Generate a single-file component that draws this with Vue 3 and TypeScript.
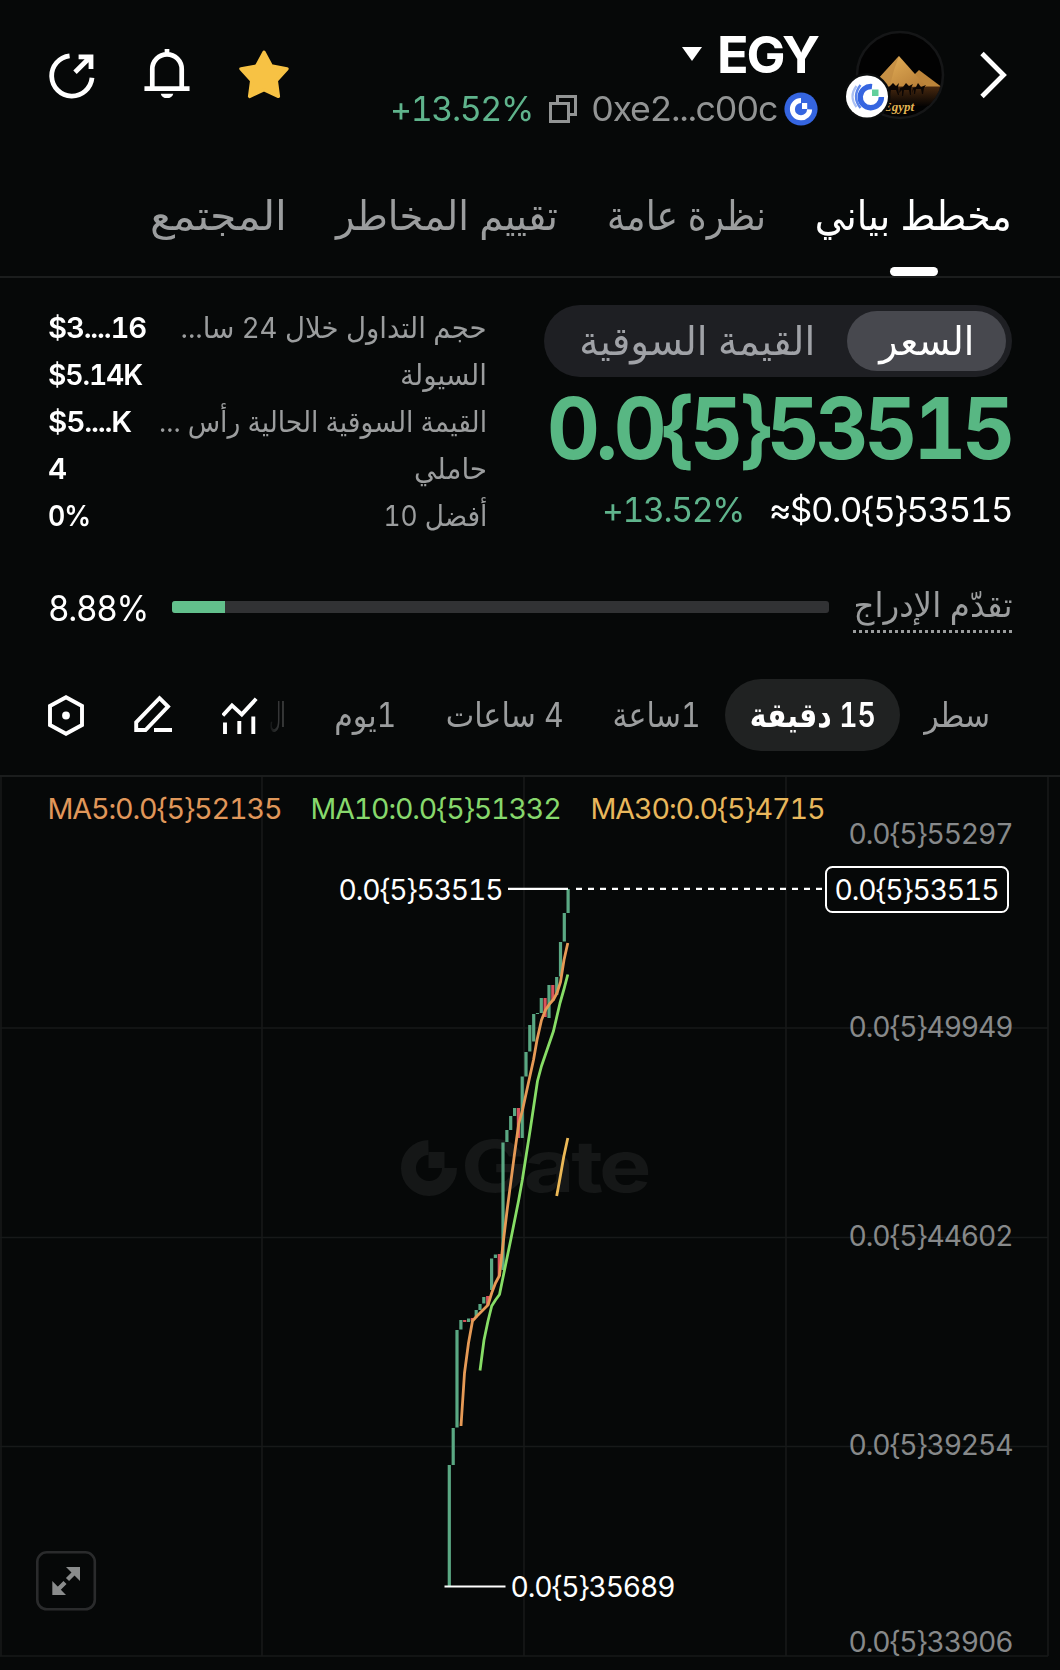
<template>
  <div class="page" dir="rtl">
    <header class="header">
      <div class="actions">
        <svg class="icon-share" width="46" height="48" viewBox="0 0 46 48">
          <path d="M20.6 4.8A20.2 20.2 0 1 0 43 26.8" />
          <path d="M26 21.3L40.6 6.7M29.6 5.9H42V18" />
        </svg>
        <svg class="icon-bell" width="46" height="51" viewBox="0 0 46 52">
          <path d="M8 39V20.5a15 15 0 0 1 30 0V39M0 40.3h46M23 0v5" />
          <path class="solid" d="M16.6 45.5h12.8a6.6 6 0 0 1-12.8 0z" />
        </svg>
        <svg class="icon-star" width="50" height="49" viewBox="0 0 50 49">
          <path
            d="M25 2.2L32.4 16L48 18.8L37.3 30.6L39.4 46.4L25 39.7L10.6 46.4L12.7 30.6L2 18.8L17.6 16Z"
          />
        </svg>
      </div>
      <div class="token">
        <div class="token-name">
          <svg width="22" height="16" viewBox="0 0 22 16"><path d="M1 1h20L11 15z" fill="#fff" /></svg>
          <b v-fit="101" class="num">EGY</b>
        </div>
        <div class="token-info">
          <span v-fit="143" class="num up">+13.52%</span>
          <svg class="icon-copy" width="28" height="28" viewBox="0 0 28 28">
            <path d="M1.5 8.5h18v18h-18zM8.5 8V1.5H26.5V19.5H20" />
          </svg>
          <span v-fit="186" class="num address">0xe2...c00c</span>
          <svg class="gate-badge" width="34" height="34" viewBox="0 0 34 34">
            <circle cx="17" cy="17" r="16.6" fill="#3565e0" />
            <path d="M17 8.6A8.6 8.6 0 1 0 25.6 17.4" fill="none" stroke="#fff" stroke-width="5" />
            <path d="M18 11h5.2v6H18z" fill="#fff" />
          </svg>
        </div>
      </div>
      <svg class="avatar" width="100" height="94" viewBox="0 0 100 94">
        <defs>
          <linearGradient id="sand" x1="0" y1="0" x2="1" y2="1">
            <stop offset="0" stop-color="#e9b65c" />
            <stop offset="1" stop-color="#b57b35" />
          </linearGradient>
          <linearGradient id="ground" x1="0" y1="0" x2="0" y2="1">
            <stop offset="0" stop-color="#4a2a10" />
            <stop offset="1" stop-color="#050302" />
          </linearGradient>
          <clipPath id="face"><circle cx="54" cy="47" r="42" /></clipPath>
        </defs>
        <circle cx="54" cy="47" r="43" fill="#020202" stroke="#151617" stroke-width="2.6" />
        <g clip-path="url(#face)">
          <path d="M10 58h90v20H10z" fill="url(#ground)" />
          <path d="M66 49L73 42L95 58.5H66z" fill="#bd853a" />
          <path d="M33 50L53 28L80 58.5H30z" fill="url(#sand)" />
          <path d="M53 28L48 42L44 57H30V53z" fill="#c08a42" opacity=".7" />
          <g fill="#0b0604">
            <path d="M40 65l2-5 2-2 3-3 3 3 3-3-1 4 1 8h-1l-2-5h-5l-1 5h-1l-1-5z" />
            <path d="M53 65l1-5 3-1 3-4 3 3 4-2-2 4v7h-1l-1-5h-5l-1 6h-1v-6z" />
            <path d="M66 65l1-5 3-1 2-4 3 4 5-2-2 3-1 6h-1l-1-5h-5l-1 5h-1v-5z" />
          </g>
          <text x="37" y="83" class="avatar-caption">Egypt</text>
        </g>
        <circle cx="21" cy="68.5" r="23.5" fill="#0a0c0c" />
        <circle cx="21" cy="68.5" r="21" fill="#fff" />
        <g fill="none">
          <path d="M26 58.6A10.6 10.6 0 1 0 35.4 69" stroke="#3565e0" stroke-width="5.4" />
          <path d="M14.5 57Q5.5 68.500 14.5 80" stroke="#5d86ea" stroke-width="2.4" />
          <path d="M10.5 58Q2.500 68.500 10.5 79" stroke="#a9bff3" stroke-width="2.2" />
        </g>
        <path d="M26 61.500h6.500v6.500H26z" fill="#62cf9c" />
      </svg>
      <svg class="icon-next" width="27" height="48" viewBox="0 0 27 48">
        <path d="M2 2.5L23.500 24L2 45.5" />
      </svg>
    </header>

    <nav class="tabs">
      <a v-for="tab in tabs" :key="tab.text" class="tab" :class="{ active: tab.active }">
        <span v-fit="tab.width">{{ tab.text }}</span>
      </a>
    </nav>

    <section class="summary">
      <div class="price">
        <div class="switch">
          <span class="switch-item on"><span v-fit="95">السعر</span></span>
          <span class="switch-item"><span v-fit="236">القيمة السوقية</span></span>
        </div>
        <div class="price-main"><span v-fit="464">0.0{5}53515</span></div>
        <div class="price-sub">
          <span v-fit="142" class="num up">+13.52%</span>
          <span v-fit="243" class="num">≈$0.0{5}53515</span>
        </div>
      </div>
      <ul class="stats">
        <li v-for="row in stats" :key="row.label">
          <span v-fit="row.labelWidth" class="stat-label">{{ row.label }}</span>
          <span v-fit="row.valueWidth" class="num stat-value">{{ row.value }}</span>
        </li>
      </ul>
    </section>

    <section class="progress">
      <span class="progress-label"><span v-fit="159">تقدّم الإدراج</span></span>
      <div class="bar"><div class="bar-fill" :style="{ width: progressFill + '%' }"></div></div>
      <span v-fit="100" class="num progress-value">8.88%</span>
    </section>

    <section class="toolbar">
      <div class="intervals">
        <span v-for="item in intervals" :key="item.text" class="interval" :class="{ on: item.active }">
          <span v-fit="item.width">{{ item.text }}</span>
        </span>
      </div>
      <div class="tools">
        <svg width="36" height="42" viewBox="0 0 36 42">
          <path d="M18 3.200L34 12V31L18 39.800L2 31V12Z" />
          <circle cx="18" cy="21.5" r="2.4" class="dot" />
        </svg>
        <svg width="38" height="42" viewBox="0 0 38 42">
          <path d="M25.500 4.200L34 12.500L11.500 36H2.200V28.300ZM20 36H38" />
        </svg>
        <svg width="36" height="42" viewBox="0 0 36 42">
          <path d="M.8 21.500L10 11.400L19.800 20.400L34.200 4.800" />
          <path d="M3 28.500V40M17.300 27V40M31.300 22.500V40" />
        </svg>
      </div>
    </section>

    <svg class="chart" width="1060" height="893" viewBox="0 777 1060 893">
      <g class="grid">
        <path v-for="x in gridX" :key="'x' + x" :d="`M${x} 777V1656`" />
        <path v-for="y in gridY" :key="'y' + y" :d="`M0 ${y}H1048`" />
      </g>

      <g class="watermark">
        <path d="M428.500 1147.500A20.500 20.500 0 1 0 449.500 1168" />
        <rect x="428.500" y="1152" width="16" height="16" />
        <text x="461" y="1192" textLength="187" lengthAdjust="spacingAndGlyphs">Gate</text>
      </g>

      <rect
        v-for="c in candles"
        :key="c[0]"
        :x="c[0] - 1.6"
        :y="c[1]"
        width="3.2"
        :height="c[2] - c[1]"
        :fill="c[3] ? '#d9535b' : '#5aa883'"
      />
      <polyline class="ma" :points="ma5" stroke="#e69a56" />
      <polyline class="ma" :points="ma10" stroke="#87dd66" />
      <polyline class="ma" :points="ma30" stroke="#ecb957" />

      <path class="mark" d="M508 888.8H568M444.5 1586.5H505.5" />
      <path class="mark dashed" d="M576 888.8H823" />
      <rect class="price-tag" x="826" y="867" width="182" height="45" rx="6.5" />

      <text
        v-for="t in chartTexts"
        :key="t.x + '-' + t.y"
        :x="t.x"
        :y="t.y"
        :fill="t.color"
        :textLength="t.width"
        lengthAdjust="spacingAndGlyphs"
      >{{ t.text }}</text>

      <g class="fullscreen">
        <rect x="37.3" y="1552.3" width="57.500" height="57" rx="9.500" />
        <path d="M66 1567H80V1581Z" />
        <path d="M52.300 1581V1595H66Z" />
        <path class="shaft" d="M76 1571L67.500 1579.500M56.500 1591L65 1582.500" />
      </g>
    </svg>
  </div>
</template>

<script setup lang="ts">
import type { Directive } from 'vue';

// Squeezes or stretches a label horizontally to the given width
const vFit: Directive<HTMLElement, number> = {
  mounted(el, { value }) {
    el.style.display = 'inline-block';
    el.style.whiteSpace = 'nowrap';
    el.style.flex = 'none';
    const natural = el.getBoundingClientRect().width;
    const rtl = getComputedStyle(el).direction === 'rtl';
    el.style.transformOrigin = rtl ? 'right center' : 'left center';
    el.style.transform = `scaleX(${value / natural})`;
    el.style.marginInlineEnd = `${value - natural}px`;
  },
};

const tabs = [
  { text: 'مخطط بياني', width: 197, active: true },
  { text: 'نظرة عامة', width: 159, active: false },
  { text: 'تقييم المخاطر', width: 222, active: false },
  { text: 'المجتمع', width: 137, active: false },
];

const stats = [
  { label: 'حجم التداول خلال 24 سا...', labelWidth: 306, value: '$3....16', valueWidth: 98 },
  { label: 'السيولة', labelWidth: 87, value: '$5.14K', valueWidth: 94 },
  { label: 'القيمة السوقية الحالية رأس ...', labelWidth: 328, value: '$5....K', valueWidth: 83 },
  { label: 'حاملي', labelWidth: 73, value: '4', valueWidth: 18 },
  { label: 'أفضل 10', labelWidth: 104, value: '0%', valueWidth: 42 },
];

const progressFill = 8.06;

const intervals = [
  { text: 'سطر', width: 66, active: false },
  { text: '15 دقيقة', width: 126, active: true },
  { text: '1ساعة', width: 88, active: false },
  { text: '4 ساعات', width: 118, active: false },
  { text: '1يوم', width: 62, active: false },
  { text: 'ال', width: 16, active: false },
];

const gridX = [1, 262, 524, 786, 1048];
const gridY = [1028, 1237.5, 1446.5, 1656];

// x, top, bottom, 1 = falling
const candles = [
  [449.3, 1465, 1586, 0],
  [453.2, 1428, 1465, 0],
  [457, 1330, 1427.5, 0],
  [460.9, 1320, 1329.5, 0],
  [464.7, 1320, 1322, 1],
  [468.6, 1318.5, 1322, 0],
  [472.4, 1318, 1321, 1],
  [476.2, 1310, 1317.5, 0],
  [480, 1304, 1310, 0],
  [483.8, 1297, 1303.5, 0],
  [487.7, 1296, 1305, 1],
  [491.6, 1258.5, 1290, 0],
  [495.4, 1254.5, 1258, 0],
  [499.3, 1254, 1276, 1],
  [503, 1142.5, 1270, 0],
  [506.9, 1130, 1142, 0],
  [510.7, 1116, 1130, 0],
  [514.6, 1108, 1116, 0],
  [518.4, 1108, 1138, 1],
  [522.2, 1076.5, 1138, 0],
  [526, 1052, 1076.5, 0],
  [529.8, 1025, 1051.5, 0],
  [533.7, 1014, 1041.5, 0],
  [537.5, 1013, 1014, 0],
  [541.3, 998, 1013, 0],
  [545.1, 998, 1017, 1],
  [549, 985, 1018, 0],
  [552.8, 985, 1001, 1],
  [556.7, 977, 995, 0],
  [560.5, 942, 976.5, 0],
  [564.3, 913, 941.5, 0],
  [568.1, 889, 913, 0],
];

const ma5 =
  '461,1426 464.5,1373 468.5,1343 472.5,1321 476.5,1316.5 480,1313 488,1305 491.7,1293 495.5,1283 ' +
  '499.5,1275.5 503.5,1240 507,1211 514.5,1154 518.7,1124 522.5,1110 529.5,1078 533.5,1060 ' +
  '537,1040 541.5,1020 545.5,1010 549.5,1004 553.5,999.5 557,993 560.5,982 564,960 567.8,943';
const ma10 =
  '480,1370.5 484,1340 488,1321 491.7,1306 495.5,1300 499.5,1294.5 503.5,1275 510.7,1240 518.7,1200 ' +
  '522.3,1180 530,1131 537.5,1081 541.5,1066 553.5,1031 560,1003 564,989 567.8,974.5';
const ma30 = '556.7,1196 560,1178 563.7,1157 567.8,1138';

const chartTexts = [
  { text: 'MA5:0.0{5}52135', x: 47.5, y: 819.3, width: 234, color: '#e0975a' },
  { text: 'MA10:0.0{5}51332', x: 310.5, y: 819.3, width: 250, color: '#87d86c' },
  { text: 'MA30:0.0{5}4715', x: 590.5, y: 819.3, width: 234, color: '#e8b75c' },
  { text: '0.0{5}55297', x: 848.5, y: 844, width: 164, color: '#87898a' },
  { text: '0.0{5}49949', x: 848.5, y: 1037, width: 164, color: '#87898a' },
  { text: '0.0{5}44602', x: 848.5, y: 1246, width: 164, color: '#87898a' },
  { text: '0.0{5}39254', x: 848.5, y: 1455, width: 164, color: '#87898a' },
  { text: '0.0{5}33906', x: 848.5, y: 1652, width: 164, color: '#87898a' },
  { text: '0.0{5}53515', x: 834.5, y: 900, width: 164, color: '#fff' },
  { text: '0.0{5}53515', x: 338.5, y: 900, width: 164, color: '#fff' },
  { text: '0.0{5}35689', x: 510.5, y: 1597, width: 164, color: '#fff' },
];
</script>

<style>
body {
  background: #060808;
}
</style>

<style scoped>
.page {
  width: 1060px;
  height: 1670px;
  overflow: hidden;
  background: #060808;
  color: #fff;
  font-family: Inter, 'DejaVu Sans', sans-serif;
  font-feature-settings: 'tnum';
}

svg {
  display: block;
  flex: none;
}

/* latin text only: arabic letters must stay joined */
.num {
  letter-spacing: -0.04em;
}

.up {
  color: #5fb48c;
}

.header {
  display: flex;
  align-items: center;
  direction: ltr;
  height: 149px;
  padding: 0 53px 0 49px;
  box-sizing: border-box;
}

.actions {
  display: flex;
  align-items: center;
  gap: 49px;
  margin-right: auto;
}

.icon-share path,
.icon-bell path {
  fill: none;
  stroke: #fff;
  stroke-width: 4.8;
}

.icon-bell .solid {
  fill: #fff;
  stroke: none;
}

.icon-star path {
  fill: #f7c244;
  stroke: #f7c244;
  stroke-width: 3.4;
  stroke-linejoin: round;
}

.token {
  display: flex;
  flex-direction: column;
  align-items: flex-end;
  gap: 5px;
  margin: 3px 28px 0 0;
}

.token-name {
  display: flex;
  align-items: center;
  gap: 14px;
  line-height: 60px;
  font-size: 51.5px;
}

.token-info {
  display: flex;
  align-items: center;
  line-height: 40px;
  font-size: 34.5px;
}

.icon-copy {
  margin: 0 14px 0 16px;
}

.icon-copy path {
  fill: none;
  stroke: #929494;
  stroke-width: 3;
}

.address {
  color: #929494;
}

.gate-badge {
  margin-left: 7px;
}

.avatar {
  margin-right: 34px;
}

.avatar-caption {
  font: italic bold 13px 'Liberation Serif', serif;
  fill: #e3b553;
}

.icon-next path {
  fill: none;
  stroke: #fff;
  stroke-width: 4.8;
}

.tabs {
  display: flex;
  gap: 49px;
  height: 129px;
  padding: 0 48px;
  border-bottom: 2px solid #1b1d1d;
  box-sizing: border-box;
}

.tab {
  position: relative;
  padding-top: 26px;
  line-height: 80px;
  font-size: 41px;
  color: #9b9d9e;
}

.tab.active {
  color: #fff;
}

.tab.active::after {
  content: '';
  position: absolute;
  bottom: 0;
  left: calc(50% - 24px);
  width: 48px;
  height: 9px;
  border-radius: 5px;
  background: #fff;
}

.summary {
  display: flex;
  gap: 57px;
  height: 305px;
  padding: 27px 48px 0 48px;
  box-sizing: border-box;
}

.price {
  width: 468px;
}

.switch {
  display: flex;
  align-items: center;
  height: 72px;
  padding: 6px;
  border-radius: 36px;
  background: #1e1f23;
  box-sizing: border-box;
}

.switch-item {
  padding: 0 32px;
  line-height: 60px;
  border-radius: 30px;
  font-size: 40px;
  color: #a0a2a7;
}

.switch-item.on {
  background: #47484e;
  color: #fff;
}

.price-main {
  direction: ltr;
  padding-left: 3px;
  line-height: 104px;
  font-size: 85px;
  font-weight: 700;
  letter-spacing: -0.05em;
  color: #58b783;
}

.price-sub {
  display: flex;
  justify-content: flex-end;
  gap: 25px;
  direction: ltr;
  margin-top: 7px;
  line-height: 44px;
  font-size: 34.5px;
}

.stats {
  flex: 1;
  margin: -1px 0 0;
  padding: 0;
  list-style: none;
}

.stats li {
  display: flex;
  justify-content: space-between;
  line-height: 47px;
  font-size: 29px;
}

.stat-label {
  color: #9b9d9e;
}

.stat-value {
  direction: ltr;
  font-weight: 600;
}

.progress {
  display: flex;
  align-items: center;
  gap: 24px;
  height: 50px;
  padding: 0 48px;
}

.progress-label {
  position: relative;
  height: 50px;
  line-height: 43px;
  font-size: 34px;
  color: #9b9d9e;
}

.progress-label::after {
  content: '';
  position: absolute;
  inset: auto 0 0 0;
  height: 3px;
  background: repeating-linear-gradient(90deg, #9b9d9e 0 3px, transparent 3px 6px);
}

.bar {
  flex: 1;
  display: flex;
  justify-content: flex-end;
  height: 12px;
  margin-top: -2px;
  border-radius: 3px;
  background: #313234;
  overflow: hidden;
}

.bar-fill {
  background: #62c08c;
}

.progress-value {
  direction: ltr;
  font-size: 35px;
}

.toolbar {
  display: flex;
  align-items: center;
  height: 144px;
  padding-top: 22px;
  border-bottom: 2px solid #1b1d1d;
  box-sizing: border-box;
}

.intervals {
  display: flex;
  width: 794px;
  padding-right: 45px;
  box-sizing: border-box;
  mask-image: linear-gradient(90deg, transparent 0, rgba(0, 0, 0, 0.4) 16px, #000 50px);
}

.interval {
  flex: none;
  padding: 0 24.5px;
  line-height: 72px;
  font-size: 34px;
  color: #9b9d9e;
}

.interval:last-child {
  padding-left: 0;
}

.interval.on {
  border-radius: 36px;
  background: #202222;
  color: #fff;
  font-weight: 600;
}

.tools {
  display: flex;
  flex: 1;
  direction: ltr;
  gap: 50px;
  padding-left: 48px;
}

.tools path {
  fill: none;
  stroke: #fff;
  stroke-width: 3.9;
}

.tools .dot {
  fill: #fff;
  stroke: #fff;
  stroke-width: 3;
}

.chart {
  direction: ltr;
}

.chart text {
  font-size: 28.5px;
  letter-spacing: -0.04em;
}

.grid path {
  fill: none;
  stroke: #171919;
  stroke-width: 1.6;
}

.watermark path {
  fill: none;
  stroke: #151717;
  stroke-width: 15;
}

.watermark rect,
.watermark text {
  fill: #151717;
}

.chart .watermark text {
  font-size: 72px;
  font-weight: 700;
}

.ma {
  fill: none;
  stroke-width: 2.8;
  stroke-linejoin: round;
}

.mark {
  stroke: #fff;
  stroke-width: 2.2;
}

.dashed {
  stroke-dasharray: 6 6;
}

.price-tag {
  fill: #060808;
  stroke: #fff;
  stroke-width: 2;
}

.fullscreen rect {
  fill: none;
  stroke: #2a2b2c;
  stroke-width: 2.6;
}

.fullscreen path {
  fill: #8a8c8c;
}

.fullscreen .shaft {
  stroke: #8a8c8c;
  stroke-width: 4.4;
}
</style>
